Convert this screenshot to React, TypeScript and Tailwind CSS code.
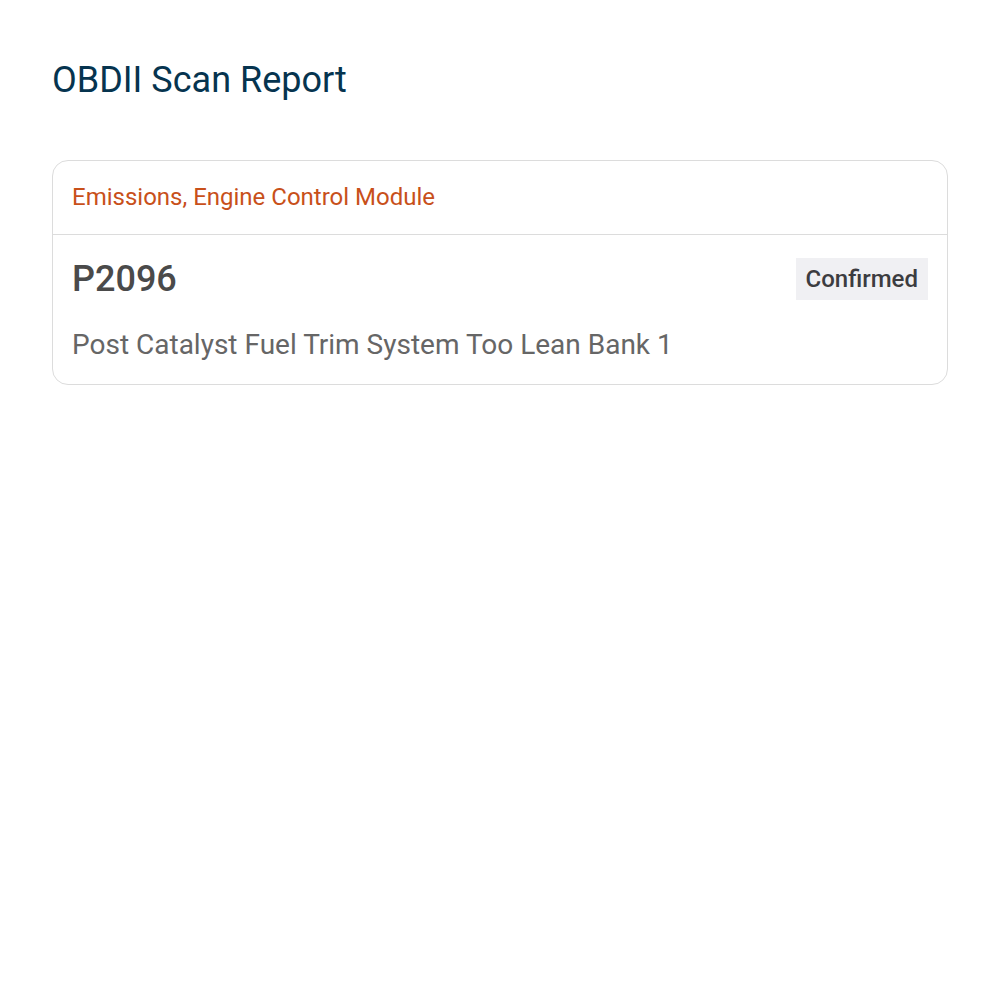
export default function App() {
  return (
    <div className="min-h-screen bg-white px-[52px] pt-[56px] font-['Roboto',sans-serif]">
      <h1 className="text-[36px] leading-[48px] text-[#06344f]">OBDII Scan Report</h1>
      <div className="mt-[56px] rounded-[16px] border border-[#dcdcdc]">
        <div className="border-b border-[#dcdcdc] px-[19px] pt-[21px] pb-[22px]">
          <div className="text-[24px] leading-[30px] text-[#c8501a]">Emissions, Engine Control Module</div>
        </div>
        <div className="px-[19px] pt-[23px] pb-[21px]">
          <div className="flex items-center justify-between">
            <div className="text-[36px] font-medium leading-[42px] text-[#4a4a4a]">P2096</div>
            <div className="bg-[#f0f0f3] px-[10px] py-[6px] text-[24px] font-medium leading-[30px] text-[#3c3c40]">Confirmed</div>
          </div>
          <div className="mt-[27px] text-[28px] leading-[36px] text-[#666666]">Post Catalyst Fuel Trim System Too Lean Bank 1</div>
        </div>
      </div>
    </div>
  );
}
